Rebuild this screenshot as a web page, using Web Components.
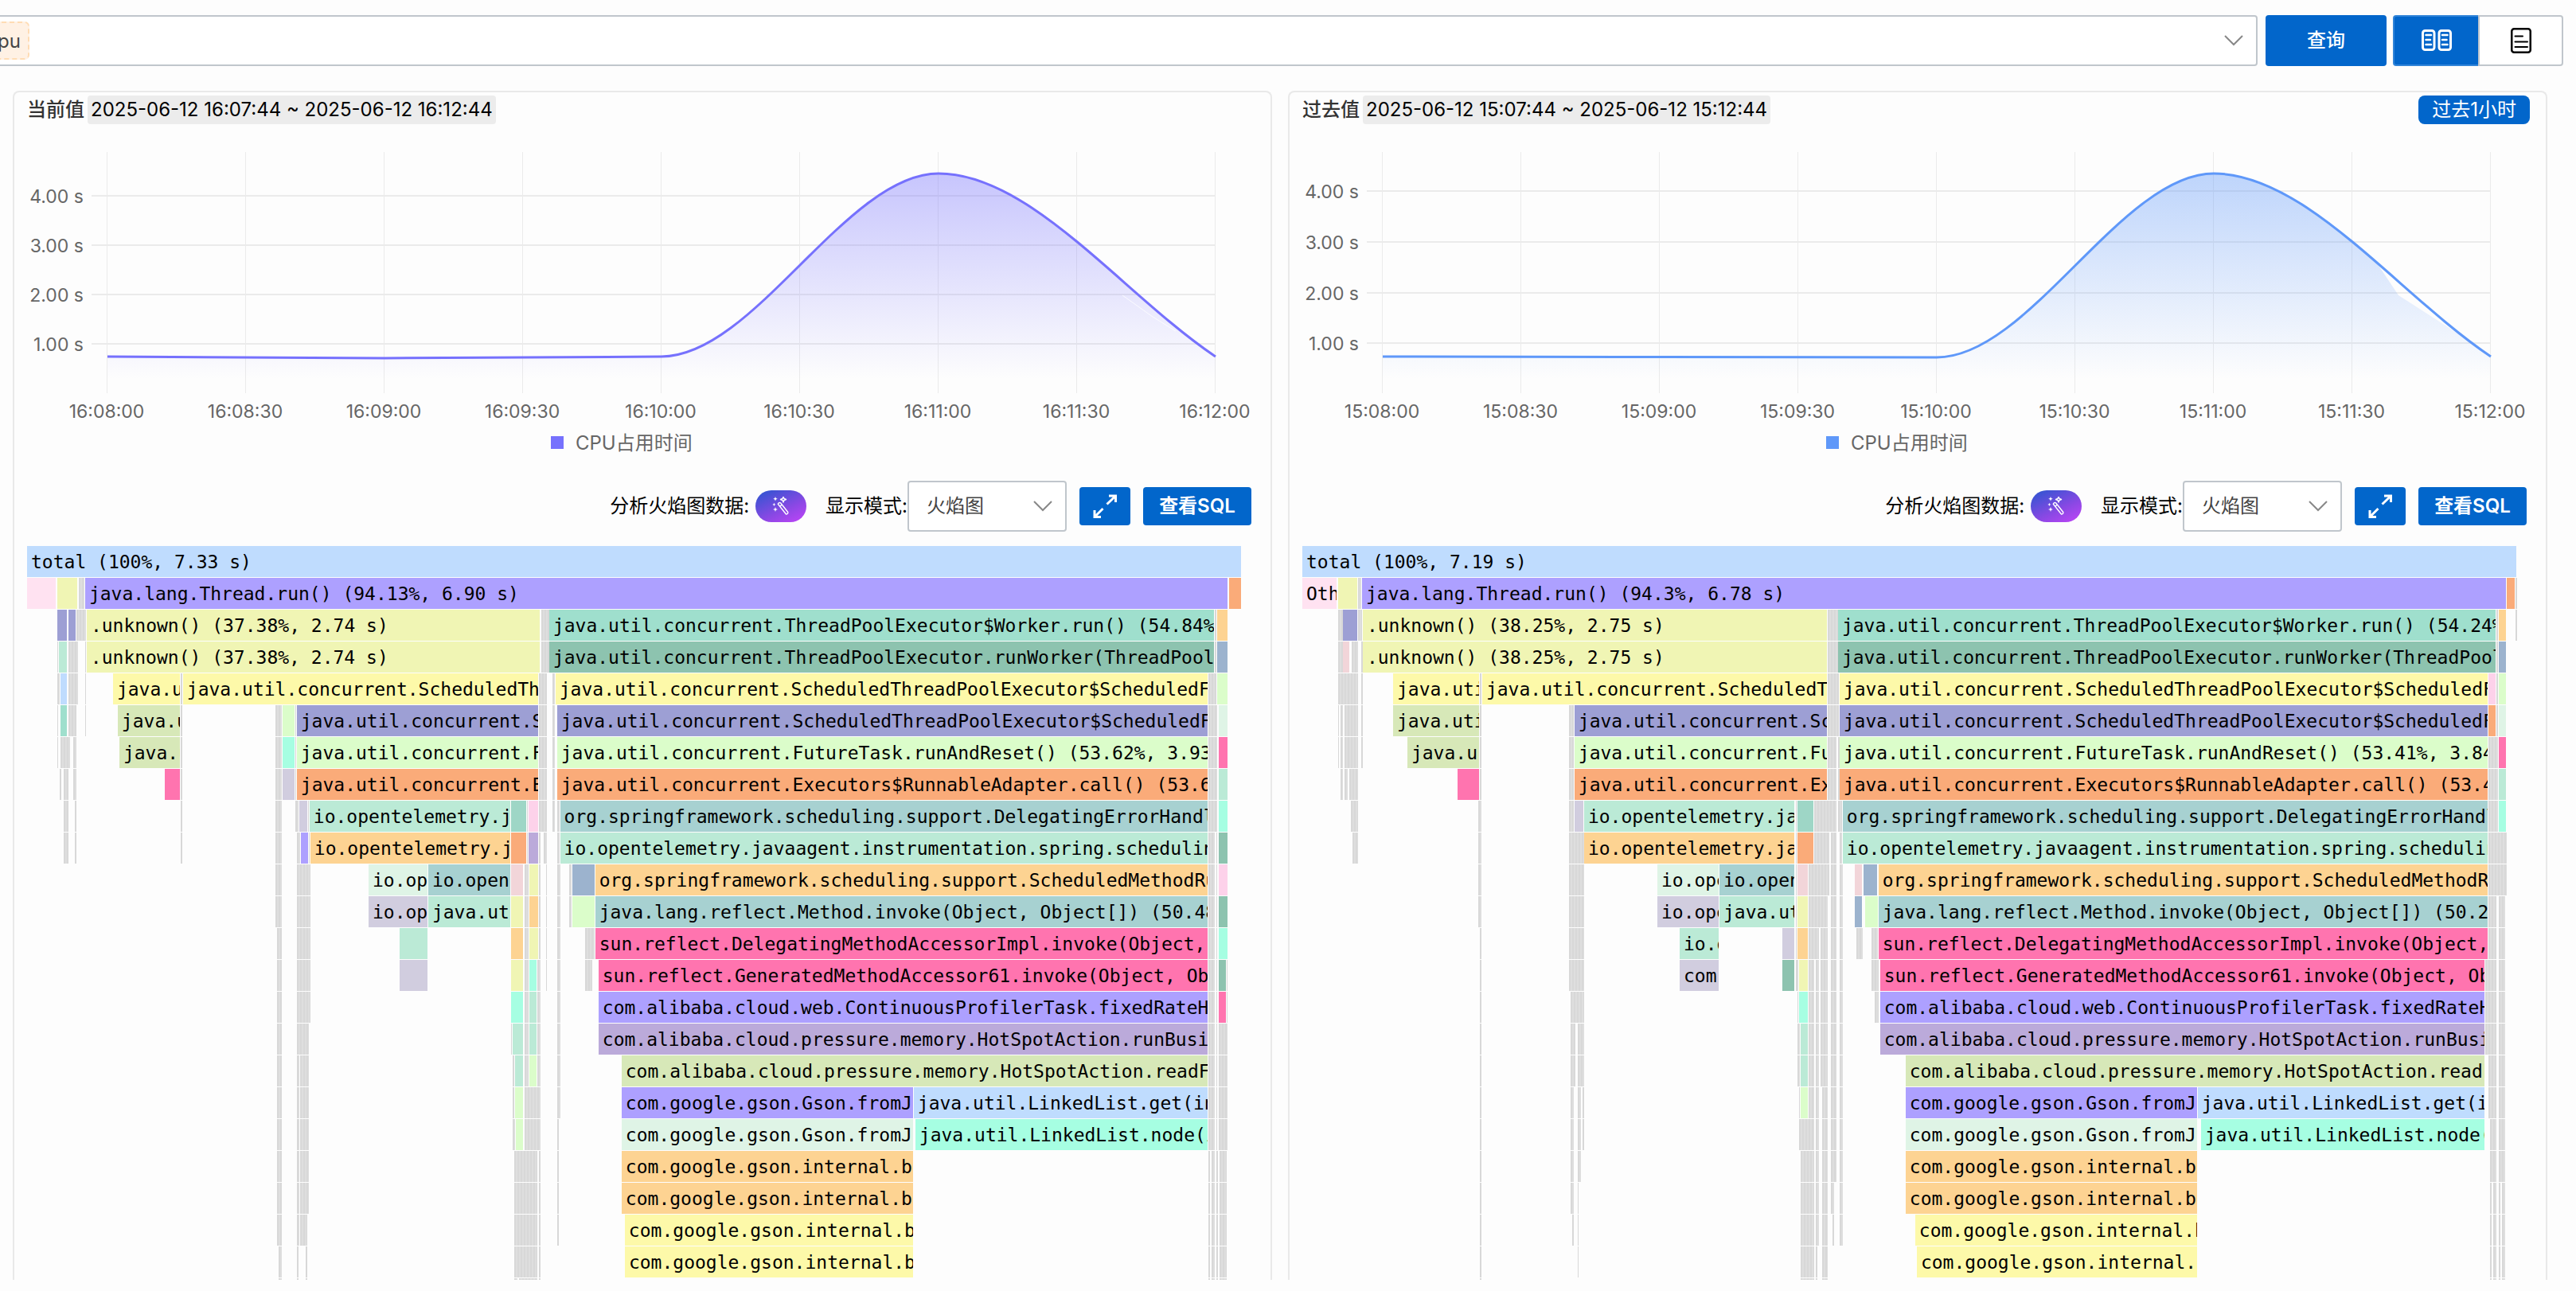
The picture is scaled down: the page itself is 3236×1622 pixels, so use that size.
<!DOCTYPE html>
<html lang="zh-CN">
<head>
<meta charset="utf-8">
<title>CPU 火焰图对比</title>
<style>
  html, body { margin: 0; height: 100%; }
  body { background: #fdfdfd; color: #111; font: 24px/36px Inter, "Noto Sans CJK SC", sans-serif; overflow: hidden; }
</style>
</head>
<body>
<profiler-app></profiler-app>

<script>
const define = (name, html, setup) => {
  const tpl = document.createElement('template');
  tpl.innerHTML = html;
  customElements.define(name, class extends HTMLElement {
    constructor() {
      super();
      this.attachShadow({ mode: 'open' }).append(tpl.content.cloneNode(true));
    }
    connectedCallback() { if (setup) setup(this, this.shadowRoot); }
  });
};

/* Charts and graphs take their data set from the panel that holds them. */
const sourceOf = el => el.getRootNode().host.getAttribute('source');

const G = { left: [], right: [] };

/* Each row: "start-end colour label" frames, in units of 1526 across the total. */
const SPLIT_L = '1484-1492 g;1494-1495 g', SPLIT_L2 = '1484-1486 g;1488-1492 g;1494-1496 g;1498-1507 g';
G.left = [
  '0-1525 b total (100%, 7.33 s)',
  '0-36 pk;38-63 li;65-72 g;73-1508 pu java.lang.Thread.run() (94.13%, 6.90 s);1510-1525 or',
  '38-50 sl;52-61 sl;62-74 g;75-644 li .unknown() (37.38%, 2.74 s);646-656 g;656-1491 te java.util.concurrent.ThreadPoolExecutor$Worker.run() (54.84%;1492-1494 g;1495-1508 pe',
  '38-39 g;40-50 mi;52-64 g;73-74 g;75-644 li .unknown() (37.38%, 2.74 s);646-656 g;656-1491 gr java.util.concurrent.ThreadPoolExecutor.runWorker(ThreadPool;1492-1494 g;1495-1508 bg',
  '38-41 g;42-50 b;52-64 g;73-74 g;108-192 ye java.u;193-195 g;196-642 ye java.util.concurrent.ScheduledTh;643-653 g;660-663 g;664-1483 ye java.util.concurrent.ScheduledThreadPoolExecutor$ScheduledF;1484-1494 g;1495-1508 lg',
  '38-39 g;42-50 te;52-62 g;73-74 g;114-192 ol java.u;193-195 g;312-320 g;321-336 lg;337-338 g;339-642 sl java.util.concurrent.S;643-653 g;660-663 g;666-1483 sl java.util.concurrent.ScheduledThreadPoolExecutor$ScheduledF;1484-1495 g;1497-1508 pa',
  '38-39 g;42-54 g;58-62 g;116-192 ol java.u;193-195 g;312-320 g;321-336 aq;337-338 g;339-642 lg java.util.concurrent.F;643-653 g;660-663 g;666-1483 lg java.util.concurrent.FutureTask.runAndReset() (53.62%, 3.93;1484-1495 g;1497-1508 ho',
  '41-43 g;46-52 g;58-62 g;173-192 ho;193-195 g;312-320 g;321-336 la;337-338 g;339-642 or java.util.concurrent.E;643-653 g;660-663 g;666-1483 or java.util.concurrent.Executors$RunnableAdapter.call() (53.6;1484-1495 g;1497-1508 mi',
  '46-52 g;60-62 g;193-195 g;312-320 g;337-341 g;342-352 la;353-354 g;355-607 mi io.opentelemetry.j;608-627 g2;628-629 g;630-642 lp;643-653 g;660-663 g;666-669 g;670-1483 tb org.springframework.scheduling.support.DelegatingErrorHandl;1484-1495 g;1497-1508 aq',
  '46-52 g;60-62 g;193-195 g;312-320 g;339-343 g;344-353 pu;354-355 g;356-607 pe io.opentelemetry.j;608-627 or;628-629 g;630-642 ma;643-645 g;649-653 g;666-669 g;670-1483 mi io.opentelemetry.javaagent.instrumentation.spring.schedulin;' + SPLIT_L + ';1497-1508 gr',
  '312-320 g;339-356 g;429-503 pa io.op;504-607 tb io.open;608-623 ro;625-630 g;631-642 li;643-645 g;652-653 g;666-670 g;681-684 g;685-713 bg;714-1483 pe org.springframework.scheduling.support.ScheduledMethodRu;' + SPLIT_L + ';1497-1508 lp',
  '312-320 g;339-356 g;429-503 la io.op;504-607 mi java.ut;608-623 li;625-630 g;631-642 pe;643-645 g;652-653 g;666-670 g;681-684 g;685-713 lg;714-1483 tb java.lang.reflect.Method.invoke(Object, Object[]) (50.48;' + SPLIT_L + ';1497-1508 gr',
  '314-320 g;339-356 g;468-503 mi;608-623 pe;625-630 g;631-642 li;643-645 g;652-653 g;666-670 g;701-713 g;714-1483 ho sun.reflect.DelegatingMethodAccessorImpl.invoke(Object,;' + SPLIT_L + ';1497-1508 aq',
  '314-320 g;339-356 g;468-503 la;608-623 li;625-630 g;631-640 aq;641-645 g;652-653 g;666-670 g;701-710 g;718-1483 ho sun.reflect.GeneratedMethodAccessor61.invoke(Object, Ob;' + SPLIT_L + ';1497-1506 gr;1507-1508 g',
  '314-320 g;339-356 g;608-623 aq;625-630 g;631-640 mi;641-645 g;666-670 g;718-1483 pu com.alibaba.cloud.web.ContinuousProfilerTask.fixedRateH;' + SPLIT_L + ';1497-1506 ho;1507-1508 g',
  '314-320 g;339-354 g;608-609 g;610-623 mi;625-630 g;631-640 mi;641-645 g;666-670 g;718-1483 ma com.alibaba.cloud.pressure.memory.HotSpotAction.runBusi;' + SPLIT_L + ';1497-1508 g',
  '314-320 g;339-342 g;343-354 g;610-612 g;613-623 mi;625-630 g;631-640 lg;641-645 g;666-670 g;747-1483 ol com.alibaba.cloud.pressure.memory.HotSpotAction.readF;' + SPLIT_L + ';1497-1508 g',
  '314-320 g;339-342 g;343-354 g;610-612 g;613-623 lg;625-645 g;666-670 g;747-1113 pu com.google.gson.Gson.fromJ;1114-1483 b java.util.LinkedList.get(in;' + SPLIT_L + ';1497-1508 g',
  '314-320 g;339-342 g;343-354 g;610-613 g;614-623 lg;625-645 g;666-668 g;747-1113 pa com.google.gson.Gson.fromJ;1116-1483 aq java.util.LinkedList.node(i;' + SPLIT_L + ';1497-1508 g',
  '314-320 g;339-342 g;343-354 g;612-641 g;643-645 g;666-668 g;747-1113 pe com.google.gson.internal.b;' + SPLIT_L2,
  '314-320 g;339-342 g;343-354 g;612-641 g;643-645 g;666-668 g;747-1113 pe com.google.gson.internal.b;' + SPLIT_L2,
  '314-320 g;339-342 g;343-352 g;612-641 g;643-645 g;666-668 g;751-1113 ye com.google.gson.internal.b;' + SPLIT_L2,
  '316-320 g;339-341 g;350-352 g;612-641 g;643-645 g;751-1113 ye com.google.gson.internal.b;' + SPLIT_L2,
  '316-320 g;339-341 g;350-352 g;612-616 g;618-641 g;643-645 g;' + SPLIT_L2
];

const END = ';1490-1500 g;1503-1511 g', END2 = ';1486-1500 g;1503-1511 g', END3 = ';1492-1494 g;1496-1500 g;1503-1505 g;1507-1511 g';
const BARS = ';636-643 g;645-649 g;651-660 g;664-671 g;675-679 g', BARS2 = ';645-649 g;653-660 g;664-671 g;675-679 g';
G.right = [
  '0-1525 b total (100%, 7.19 s)',
  '0-43 pk Oth;45-69 li;70-74 g;75-1512 pu java.lang.Thread.run() (94.3%, 6.78 s);1513-1523 or;1524-1526 g',
  '45-51 g;51-69 sl;70-75 g;76-659 li .unknown() (38.25%, 2.75 s);660-673 g;673-1499 te java.util.concurrent.ThreadPoolExecutor$Worker.run() (54.24%;1500-1502 g;1503-1512 pe;1524-1526 g',
  '45-51 g;51-59 ro;62-70 g;74-76 g;76-659 li .unknown() (38.25%, 2.75 s);660-673 g;673-1499 gr java.util.concurrent.ThreadPoolExecutor.runWorker(ThreadPool;1500-1502 g;1503-1512 bg',
  '45-70 g;74-76 g;114-222 ye java.uti;223-225 g;226-659 ye java.util.concurrent.ScheduledT;660-674 g;675-1489 ye java.util.concurrent.ScheduledThreadPoolExecutor$ScheduledF;1490-1499 lp;1500-1502 g;1503-1512 lg',
  '45-46 g;48-51 g;53-70 g;74-76 g;114-222 ol java.uti;223-225 g;335-341 g;342-659 sl java.util.concurrent.Sc;660-674 g;675-1489 sl java.util.concurrent.ScheduledThreadPoolExecutor$ScheduledF;1490-1499 or;1500-1502 g;1503-1512 pa',
  '45-46 g;48-51 g;53-70 g;74-76 g;132-222 ol java.u;223-225 g;335-341 g;342-659 lg java.util.concurrent.Fu;660-671 g;673-675 g;675-1489 lg java.util.concurrent.FutureTask.runAndReset() (53.41%, 3.84;1490-1502 g;1503-1512 ho',
  '48-51 g;53-57 g;59-70 g;195-222 ho;223-225 g;335-341 g;342-659 or java.util.concurrent.Ex;660-671 g;673-675 g;675-1489 or java.util.concurrent.Executors$RunnableAdapter.call() (53.4;1490-1502 g;1503-1512 mi',
  '61-70 g;221-225 g;335-341 g;342-353 la;354-618 mi io.opentelemetry.ja;620-621 g;622-642 g2;643-671 g;673-678 g;679-1489 tb org.springframework.scheduling.support.DelegatingErrorHandl;1490-1502 g;1503-1512 aq',
  '63-70 g;221-225 g;335-354 g;354-618 pe io.opentelemetry.ja;620-621 g;622-642 or;643-662 g;664-671 g;675-678 g;679-1489 mi io.opentelemetry.javaagent.instrumentation.spring.schedulin;1490-1513 g',
  '221-225 g;335-354 g;446-523 pa io.ope;524-618 tb io.open;620-621 g;622-635 ro;636-662 g;664-671 g;675-679 g;694-703 ro;705-722 bg;724-1489 pe org.springframework.scheduling.support.ScheduledMethodR;1490-1513 g',
  '221-225 g;335-354 g;446-523 la io.ope;524-618 mi java.ut;620-621 g;622-635 li;636-660 g;664-671 g;675-679 g;694-703 bg;707-723 lg;724-1489 tb java.lang.reflect.Method.invoke(Object, Object[]) (50.2' + END,
  '223-225 g;335-354 g;474-523 mi io.o;603-618 la;620-621 g;622-635 pe;636-649 g;651-660 g;664-671 g;675-679 g;696-704 g;715-723 g;724-1489 ho sun.reflect.DelegatingMethodAccessorImpl.invoke(Object,' + END,
  '223-225 g;335-354 g;474-523 la com;603-618 gr;620-623 g;624-635 li' + BARS + ';715-724 g;726-1485 ho sun.reflect.GeneratedMethodAccessor61.invoke(Object, Ob' + END2,
  '223-225 g;337-354 g;622-623 g;624-635 aq' + BARS + ';719-724 g;726-1485 pu com.alibaba.cloud.web.ContinuousProfilerTask.fixedRateH' + END2,
  '223-225 g;337-343 g;346-354 g;622-625 g;626-635 mi' + BARS + ';726-1485 ma com.alibaba.cloud.pressure.memory.HotSpotAction.runBusi' + END2,
  '223-225 g;337-343 g;346-354 g;622-625 g;626-635 mi' + BARS + ';758-1485 ol com.alibaba.cloud.pressure.memory.HotSpotAction.readF' + END,
  '223-225 g;337-341 g;346-350 g;352-354 g;624-625 g;626-635 lg;636-643 g' + BARS2 + ';758-1124 pu com.google.gson.Gson.fromJ;1125-1485 b java.util.LinkedList.get(in' + END,
  '223-225 g;337-341 g;346-350 g;352-354 g;624-643 g' + BARS2 + ';758-1124 pa com.google.gson.Gson.fromJ;1129-1485 aq java.util.LinkedList.node(;1492-1500 g;1503-1511 g',
  '223-225 g;337-341 g;346-350 g;626-643 g' + BARS2 + ';758-1124 pe com.google.gson.internal.b;1492-1500 g;1503-1511 g',
  '223-225 g;337-341 g;346-347 g;626-643 g;645-649 g;653-660 g;664-668 g;675-679 g;758-1124 pe com.google.gson.internal.b' + END3,
  '223-225 g;339-341 g;346-347 g;626-643 g;645-649 g;653-660 g;666-668 g;675-679 g;770-1124 ye com.google.gson.internal.b' + END3,
  '223-225 g;346-347 g;626-643 g;645-647 g;653-660 g;772-1124 ye com.google.gson.internal.' + END3,
  '223-225 g;626-643 g;645-647 g;653-660 g' + END3
];

define('flame-graph', `
<style>
  :host { display: flex; flex-direction: column; gap: 1px; overflow: hidden;
          font: 23px/41px "DejaVu Sans Mono", monospace; color: #000; }
  .row { display: flex; height: 39px; flex: none; }
  .row > span { flex: none; box-sizing: border-box; overflow: hidden; white-space: pre; }
  .row > .label { padding-left: 5px; }
  .g { background: repeating-linear-gradient(90deg, #d8d8d8 0 2px, #dedede 2px 4px); }
  .b { background: #bfdcfe; } .pk { background: #ffe2f1; } .li { background: #f0f5b4; }
  .pu { background: #ada0ff; } .or { background: #faab79; } .sl { background: #9d9fd4; }
  .te { background: #9fdfcd; } .pe { background: #fdd392; } .mi { background: #bbead6; }
  .gr { background: #8dc3af; } .bg { background: #9cb3ce; } .ye { background: #fdf9a9; }
  .lg { background: #dbfdca; } .ol { background: #d7e8b8; } .pa { background: #dff4e6; }
  .aq { background: #a6fee2; } .ho { background: #ff74af; } .la { background: #d1cddf; }
  .g2 { background: #9ed6c6; } .lp { background: #fdd2ea; } .tb { background: #a7d1d1; }
  .ma { background: #bbaada; } .ro { background: #f2d5d9; }
</style>`, (host, root) => {
  const total = 1526;
  for (const line of G[sourceOf(host)]) {
    const row = document.createElement('div');
    row.className = 'row';
    let at = 0;
    for (const item of line.split(';')) {
      const [, a, b, color, label] = item.match(/^(\d+)-(\d+) (\w+) ?(.*)$/);
      const frame = document.createElement('span');
      frame.className = label ? color + ' label' : color;
      frame.textContent = label;
      frame.style.marginLeft = (a - at) / total * 100 + '%';
      frame.style.width = (b - a) / total * 100 + '%';
      row.append(frame);
      at = +b;
    }
    root.append(row);
  }
});

const CHARTS = {
  left: {
    color: '#7671fd', hour: 16, ticks: [90, 152, 214, 276],
    line: 'M117 292C233 293 349 294 465 294S697 293 813 292C929 292 1045 62 1161 62C1277 62 1393 214 1509 292',
    area: 'M117 292C233 293 349 294 465 294S697 293 813 292C929 292 1045 62 1161 62C1277 62 1393 214 1509 292V338H117Z',
    extra: '<path d="M1392 215L1430 242L1459 260" stroke="#fff" stroke-width="1" fill="none" opacity=".8"/>'
  },
  right: {
    color: '#5f98f9', hour: 15, ticks: [84, 148, 212, 275],
    line: 'M117 292C349 292 581 293 813 293C929 293 1045 62 1161 62C1277 62 1393 214 1509 292',
    area: 'M117 292C349 292 581 293 813 293C929 293 1045 62 1161 62C1229 62 1297 114 1365 173L1393 215L1463 260L1509 292V338H117Z',
    extra: ''
  }
};

define('usage-chart', `
<style>
  :host { display: block; }
  svg { display: block; width: 100%; height: auto; font-size: 23px; fill: #666; }
  .legend { font-size: 24px; }
</style>`, (host, root) => {
  const c = CHARTS[sourceOf(host)];
  const times = ['08:00', '08:30', '09:00', '09:30', '10:00', '10:30', '11:00', '11:30', '12:00'];
  const holder = document.createElement('div');
  holder.innerHTML = `<svg viewBox="0 0 1578 448" role="img" aria-label="CPU占用时间">
    <defs><linearGradient id="fade" gradientUnits="userSpaceOnUse" x1="0" y1="62" x2="0" y2="320">
      <stop offset="0" stop-color="${c.color}" stop-opacity=".4"/><stop offset="1" stop-color="${c.color}" stop-opacity="0"/>
    </linearGradient></defs>
    <g stroke="#ebebeb">
      ${times.map((t, i) => `<path d="M${116 + 174 * i}.5 35V338"/>`).join('')}
      ${c.ticks.map(y => `<path stroke-width="2" d="M97 ${y}H1509"/>`).join('')}
    </g>
    <path d="${c.area}" fill="url(#fade)"/>${c.extra}
    <path d="${c.line}" fill="none" stroke="${c.color}" stroke-width="3"/>
    ${c.ticks.map((y, i) => `<text x="87" y="${y + 9}" text-anchor="end">${4 - i}.00 s</text>`).join('')}
    ${times.map((t, i) => `<text x="${116 + 174 * i}" y="369" text-anchor="middle">${c.hour}:${t}</text>`).join('')}
    <rect x="674" y="392" width="16" height="16" fill="${c.color}"/>
    <text class="legend" x="705" y="409">CPU占用时间</text>
  </svg>`;
  root.append(holder.firstChild);
});

define('mode-select', `
<style>
  :host { display: inline-grid; width: 200px; height: 64px; align-items: center; }
  select, svg { grid-area: 1 / 1; }
  select { appearance: none; box-sizing: border-box; width: 100%; height: 100%; padding: 0 22px;
           border: 2px solid #c0c6cc; border-radius: 4px; background: #fff; color: #444; font: inherit; }
  svg { justify-self: end; margin-right: 18px; pointer-events: none; }
</style>
<select id="mode" aria-label="显示模式"><option>火焰图</option></select>
<svg width="24" height="14" viewBox="0 0 24 14" fill="none" stroke="#888" stroke-width="2"><path d="M1 1L12 12L23 1"/></svg>`);

define('profile-panel', `
<style>
  :host { display: flex; flex-direction: column; flex: 1 1 0; min-width: 0; min-height: 0; overflow: hidden;
          border: 2px solid #e9e9e9; border-bottom: 0; border-radius: 8px 8px 0 0; }
  header { display: flex; align-items: center; gap: 4px; padding: 4px 20px 0 16px; }
  h2 { margin: 0; font-size: 24px; line-height: 36px; font-weight: 500; color: #333; }
  time { padding: 0 4px; border-radius: 4px; background: #ececec; color: #000; line-height: 36px; }
  ::slotted([slot=badge]) { margin-left: auto; padding: 0 17px; border-radius: 8px; background: #0266cb; color: #fff; line-height: 36px; }
  .tools { display: flex; align-items: center; justify-content: flex-end; padding: 0 24px 18px 0; color: #000; }
  button { border: 0; padding: 0; color: #fff; font: inherit; display: flex; align-items: center; justify-content: center; }
  .ai { width: 64px; height: 40px; margin: 0 24px 0 8px; border-radius: 20px; background: linear-gradient(155deg, #2856cf, #8b48e4 60%, #c144f8); }
  .solid { height: 48px; border-radius: 4px; background: #0266cb; font-weight: 500; }
  .expand { width: 64px; margin: 0 16px; }
  .sql { width: 136px; font-weight: 600; }
  flame-graph { flex: 1 1 0; min-height: 0; margin: 0 36px 0 16px; }
</style>
<header><h2><slot name="title"></slot></h2><time><slot name="range"></slot></time><slot name="badge"></slot></header>
<usage-chart></usage-chart>
<div class="tools">
  <span>分析火焰图数据:</span>
  <button class="ai" aria-label="智能分析">
    <svg width="24" height="24" viewBox="0 0 24 24" fill="none" stroke="#fff" stroke-width="1.4" stroke-linejoin="round">
      <path d="M8.3 9.2Q9.5 7 11.5 7.8L20.8 19.5Q21 22 18.5 22Z M10.5 12.2L13.4 10.1"/>
      <path d="M15 0L16 2.5L18.5 3.5L16 4.5L15 7L14 4.5L11.5 3.5L14 2.5Z"/>
      <path fill="#fff" stroke="none" d="M5 0L5.8 2L7.8 2.8L5.8 3.6L5 5.6L4.2 3.6L2.2 2.8L4.2 2ZM3.4 7.8L4 9.3L5.5 9.9L4 10.5L3.4 12L2.8 10.5L1.3 9.9L2.8 9.3ZM5 13L5.8 15.2L8 16L5.8 16.8L5 19L4.2 16.8L2 16L4.2 15.2Z"/>
    </svg>
  </button>
  <span>显示模式:</span><mode-select></mode-select>
  <button class="solid expand" aria-label="全屏">
    <svg width="32" height="32" viewBox="0 0 32 32" fill="none" stroke="#fff" stroke-width="3"><path d="M21 3H29.5V11M29 3.5L18.5 13.5M3 21V29.5H11M3.5 29L13.5 19"/></svg>
  </button>
  <button class="solid sql">查看SQL</button>
</div>
<flame-graph></flame-graph>`);

define('query-bar', `
<style>
  :host { display: flex; align-items: center; padding: 19px 16px 0 0; }
  button { box-sizing: border-box; height: 64px; padding: 0; font: inherit; display: flex; align-items: center; justify-content: center; }
  .field { flex: 1 1 0; min-width: 0; margin-left: -16px; padding: 0 16px 0 0; border: 2px solid #c0c6cc; border-radius: 4px; background: #fff; justify-content: space-between; }
  .tag { box-sizing: border-box; height: 48px; padding: 0 9px; border: 2px dashed #ffdcb4; border-radius: 6px; background: #fff1e4; color: #444; line-height: 46px; }
  .go { width: 152px; margin: 0 8px 0 10px; border: 0; border-radius: 4px; background: #0266cb; color: #fff; font-weight: 500; }
  .view { width: 107px; border: 2px solid #c0c6cc; background: #fff; }
  .on { border-color: #3184d8; border-right-width: 0; border-radius: 4px 0 0 4px; background: #0266cb; }
  .off { border-radius: 0 4px 4px 0; }
</style>
<button class="field" role="combobox" aria-expanded="false"><span class="tag">pu</span>
  <svg width="24" height="14" viewBox="0 0 24 14" fill="none" stroke="#888" stroke-width="2"><path d="M1 1L12 12L23 1"/></svg>
</button>
<button class="go">查询</button>
<button class="view on" aria-label="对比视图">
  <svg width="38" height="28" viewBox="0 0 38 28" fill="none" stroke="#fff" stroke-width="3" stroke-linecap="round">
    <rect x="1.5" y="1.5" width="14.5" height="24" rx="3"/><rect x="22" y="1.5" width="14.5" height="24" rx="3"/>
    <path stroke-width="2.5" d="M5.5 7H12M5.5 13H11M5.5 19H12M26 7H32.5M26 13H31.5M26 19H32.5"/>
  </svg>
</button>
<button class="view off" aria-label="单一视图">
  <svg width="26" height="32" viewBox="0 0 26 32" fill="none" stroke="#000" stroke-width="2.5" stroke-linecap="round">
    <rect x="1.25" y="1.25" width="23.5" height="29.5" rx="3"/><path stroke-width="2" d="M5.5 10.500H15M5.5 17.500H21M5.5 24H21"/>
  </svg>
</button>`);

define('profiler-app', `
<style>
  :host { display: flex; flex-direction: column; box-sizing: border-box; height: 100vh; padding-bottom: 14px; overflow: hidden; }
  main { display: flex; flex: 1 1 0; min-height: 0; gap: 20px; margin: 31px 36px 0 16px; }
</style>
<query-bar></query-bar>
<main>
  <profile-panel source="left">
    <span slot="title">当前值</span><span slot="range">2025-06-12 16:07:44 ~ 2025-06-12 16:12:44</span>
  </profile-panel>
  <profile-panel source="right">
    <span slot="title">过去值</span><span slot="range">2025-06-12 15:07:44 ~ 2025-06-12 15:12:44</span>
    <span slot="badge">过去1小时</span>
  </profile-panel>
</main>`);
</script>
</body>
</html>
